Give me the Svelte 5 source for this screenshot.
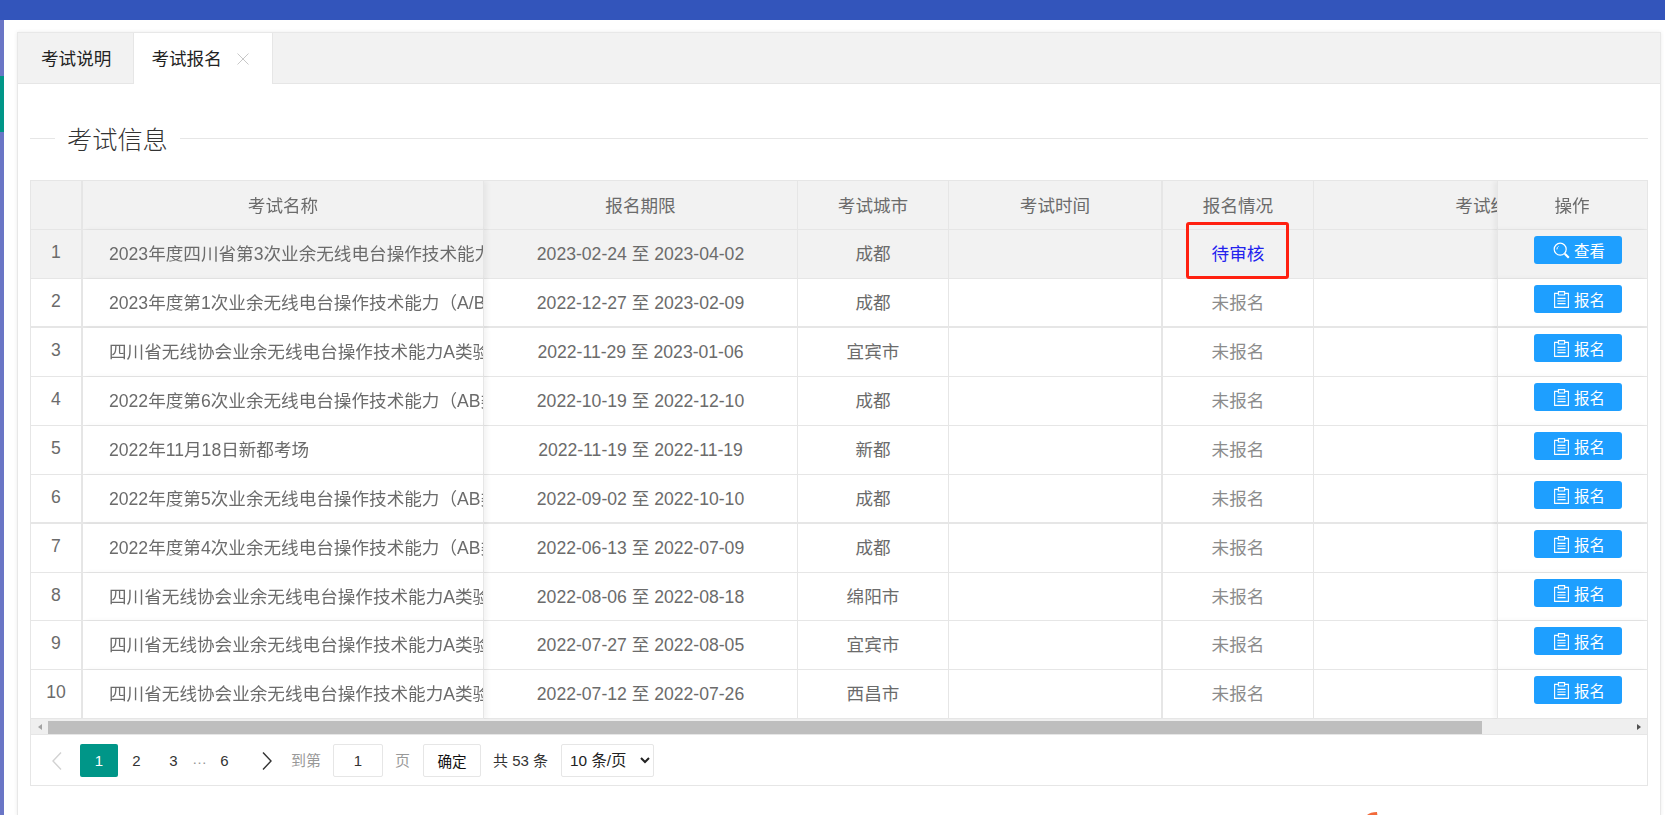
<script lang="ts">
	const columns = ['', '考试名称', '报名期限', '考试城市', '考试时间', '报名情况', '考试结果', '操作'];

	const exams = [
		{ name: '2023年度四川省第3次业余无线电台操作技术能力验证考试', start: '2023-02-24', end: '2023-04-02', city: '成都', status: '待审核' },
		{ name: '2023年度第1次业余无线电台操作技术能力（A/B类）考试', start: '2022-12-27', end: '2023-02-09', city: '成都', status: '未报名' },
		{ name: '四川省无线协会业余无线电台操作技术能力A类验证考试', start: '2022-11-29', end: '2023-01-06', city: '宜宾市', status: '未报名' },
		{ name: '2022年度第6次业余无线电台操作技术能力（AB类）考试', start: '2022-10-19', end: '2022-12-10', city: '成都', status: '未报名' },
		{ name: '2022年11月18日新都考场', start: '2022-11-19', end: '2022-11-19', city: '新都', status: '未报名' },
		{ name: '2022年度第5次业余无线电台操作技术能力（AB类）考试', start: '2022-09-02', end: '2022-10-10', city: '成都', status: '未报名' },
		{ name: '2022年度第4次业余无线电台操作技术能力（AB类）考试', start: '2022-06-13', end: '2022-07-09', city: '成都', status: '未报名' },
		{ name: '四川省无线协会业余无线电台操作技术能力A类验证考试', start: '2022-08-06', end: '2022-08-18', city: '绵阳市', status: '未报名' },
		{ name: '四川省无线协会业余无线电台操作技术能力A类验证考试', start: '2022-07-27', end: '2022-08-05', city: '宜宾市', status: '未报名' },
		{ name: '四川省无线协会业余无线电台操作技术能力A类验证考试', start: '2022-07-12', end: '2022-07-26', city: '西昌市', status: '未报名' }
	];
</script>

<div class="page">
	<div class="topbar"></div>
	<div class="body">
		<div class="strip"><div class="strip-active"></div></div>
		<main class="main">
			<section class="card">
				<div class="tabs">
					<div class="tab">考试说明</div>
					<div class="tab active">
						考试报名
						<svg class="close" viewBox="0 0 12 12" width="12" height="12"><path d="M.5.5l11 11M11.5.5l-11 11" stroke="#c8c8c8" fill="none" /></svg>
					</div>
				</div>
				<div class="content">
					<div class="legend"><span class="line short"></span><h2>考试信息</h2><span class="line"></span></div>

					<div class="table-box">
						<div class="table-scroll">
							<table>
								<colgroup>
									<col style="width:52px" /><col style="width:401px" /><col style="width:314px" /><col style="width:151px" />
									<col style="width:214px" /><col style="width:151px" /><col style="width:354px" /><col style="width:150px" />
								</colgroup>
								<thead>
									<tr>
										{#each columns as c, i}
											<th class:fix-index={i === 0} class:fix-name={i === 1} class:fix-op={i === 7} class:wide={i === 0 || i === 4}>{c}</th>
										{/each}
									</tr>
								</thead>
								<tbody>
									{#each exams as e, i}
										<tr class:current={i === 0} class:thick={i === 1 || i === 5} class:short-row={i === 7}>
											<td class="fix-index wide">{i + 1}</td>
											<td class="fix-name name"><div class="clip">{e.name}</div></td>
											<td>{e.start} 至 {e.end}</td>
											<td>{e.city}</td>
											<td class="wide"></td>
											<td class="status" class:pending={i === 0}>
												{e.status}
												{#if i === 0}<span class="mark"></span>{/if}
											</td>
											<td></td>
											<td class="fix-op op">
												<button class="btn">
													{#if i === 0}
														<svg viewBox="0 0 17 17" width="17" height="17" fill="none" stroke="#fff"><circle cx="7.2" cy="7.2" r="6" stroke-width="1.2" /><path d="M3.9 7.4a3.4 3.4 0 0 1 1.6-3" stroke-width="1" /><path d="M11.8 11.8l4 4" stroke-width="2.2" /></svg>
														查看
													{:else}
														<svg viewBox="0 0 17 17" width="17" height="17" fill="none" stroke="#fff" stroke-width="1.1"><path d="M5 2.4H1.6v14h13.8v-14H12" /><path d="M5.4 .6h6.2v3.4H5.4z" /><path d="M4.4 7.4h8.2M4.4 10h8.2M4.4 12.6h8.2" /></svg>
														报名
													{/if}
												</button>
											</td>
										</tr>
									{/each}
								</tbody>
							</table>
						</div>
						<div class="scrollbar">
							<span class="arrow left"></span>
							<div class="track"><div class="thumb"></div></div>
							<span class="arrow right"></span>
						</div>
						<div class="pager">
							<span class="pg nav">
								<svg viewBox="0 0 12 20" width="12" height="20" fill="none" stroke="#d2d2d2" stroke-width="1.4"><path d="M10 1.5L2 10l8 8.5" /></svg>
							</span>
							<span class="pg first">1</span>
							<span class="pg">2</span>
							<span class="pg">3</span>
							<span class="dots">…</span>
							<span class="pg">6</span>
							<span class="pg nav next">
								<svg viewBox="0 0 12 20" width="12" height="20" fill="none" stroke="#333" stroke-width="1.4"><path d="M2 1.5L10 10l-8 8.5" /></svg>
							</span>
							<span class="hint goto">到第</span>
							<input class="page-input" value="1" />
							<span class="hint unit">页</span>
							<button class="confirm">确定</button>
							<span class="total">共 53 条</span>
							<select class="size"><option>10 条/页</option><option>20 条/页</option></select>
						</div>
					</div>
				</div>
			</section>
		</main>
	</div>
	<svg class="corner" viewBox="0 0 12 4" width="12" height="4"><path d="M0 4C2 1.5 6 .2 11 0l.5 4z" fill="#f26a3a" /></svg>
</div>

<style>
	:global(body) {
		margin: 0;
		background: #fff;
	}

	.page {
		height: 815px;
		overflow: hidden;
		position: relative;
		display: flex;
		flex-direction: column;
		font-family: 'Liberation Sans', 'Noto Sans CJK SC', sans-serif;
		color: #6b6b6b;
		font-size: 17.6px;
	}

	.topbar {
		height: 20px;
		flex: none;
		background: #3355bb;
	}

	.body {
		flex: 1;
		display: flex;
		min-height: 0;
	}

	.strip {
		width: 4px;
		flex: none;
		background: #6a76c6;
		padding-top: 56px;
	}

	.strip-active {
		height: 56px;
		background: #009688;
	}

	.main {
		flex: 1;
		min-width: 0;
		padding: 12px 4px 0 13px;
	}

	.card {
		height: 100%;
		border: 1px solid #e8e8e8;
		border-bottom: none;
		box-shadow: 0 0 4px rgba(0, 0, 0, 0.08);
		background: #fff;
	}

	.tabs {
		display: flex;
		height: 51px;
		box-sizing: border-box;
		background: #f2f2f2;
		border-bottom: 1px solid #e6e6e6;
	}

	.tab {
		display: flex;
		align-items: center;
		padding: 0 22px 2px 23px;
		height: 50px;
		box-sizing: border-box;
		color: #222;
	}

	.tab.active {
		background: #fff;
		height: 51px;
		padding: 0 23px 2px 17px;
		border-left: 1px solid #e6e6e6;
		border-right: 1px solid #e6e6e6;
	}

	.close {
		margin-left: 15px;
		margin-top: 3px;
	}

	.content {
		padding: 36px 12px 0 12px;
	}

	.legend {
		display: flex;
		align-items: center;
		height: 36px;
		margin-bottom: 24px;
	}

	.legend h2 {
		margin: 0 12px;
		font-size: 25.2px;
		font-weight: 300;
		color: #333;
		white-space: nowrap;
	}

	.line {
		flex: 1;
		height: 1px;
		background: #e6e6e6;
	}

	.line.short {
		flex: none;
		width: 25px;
	}

	.table-box {
		border: 1px solid #e6e6e6;
	}

	.table-scroll {
		overflow: hidden;
	}

	table {
		width: 1787px;
		table-layout: fixed;
		border-collapse: separate;
		border-spacing: 0;
	}

	th,
	td {
		box-sizing: border-box;
		height: 49px;
		padding: 0 0 3px;
		background: #fff;
		text-align: center;
		font-weight: 400;
		white-space: nowrap;
		border-right: 1px solid #e6e6e6;
		border-bottom: 1px solid #e6e6e6;
		position: relative;
	}

	th {
		background: #f2f2f2;
		padding-bottom: 2px;
	}

	th.wide,
	td.wide {
		border-right-width: 2px;
	}

	tr.current td {
		background: #f2f2f2;
	}

	tr.thick td {
		border-bottom-width: 2px;
	}

	tr.short-row td {
		height: 48px;
	}

	.fix-index {
		position: sticky;
		left: 0;
		z-index: 2;
	}

	.fix-name {
		position: sticky;
		left: 52px;
		z-index: 2;
		box-shadow: 3px 0 5px rgba(0, 0, 0, 0.05);
	}

	.fix-op {
		position: sticky;
		right: 0;
		z-index: 2;
		border-right: none;
		border-left: 1px solid #e6e6e6;
		box-shadow: -3px 0 5px rgba(0, 0, 0, 0.05);
	}

	.name {
		text-align: left;
	}

	.clip {
		padding-left: 26px;
		overflow: hidden;
	}

	.status {
		color: #8c8c8c;
	}

	.status.pending {
		color: #2222ee;
		z-index: 1;
	}

	.mark {
		position: absolute;
		left: 23px;
		top: -8px;
		width: 103px;
		height: 57px;
		box-sizing: border-box;
		border: 3px solid #ff2010;
		border-radius: 3px;
	}

	th.fix-op {
		padding-right: 1px;
	}

	td.op {
		vertical-align: top;
		padding: 6px 0 0 10px;
	}

	.btn {
		display: inline-flex;
		align-items: center;
		justify-content: center;
		gap: 4px;
		width: 88px;
		height: 28px;
		padding: 0 0 0 3px;
		border: none;
		border-radius: 3px;
		background: #1e9fff;
		color: #fff;
		font: inherit;
		font-size: 15.4px;
	}

	.scrollbar {
		display: flex;
		align-items: center;
		height: 16px;
		background: #efefef;
		border-bottom: 1px solid #e6e6e6;
		box-sizing: border-box;
	}

	.arrow {
		flex: none;
		width: 17px;
		display: flex;
		justify-content: center;
	}

	.arrow::before {
		content: '';
		border: 3.5px solid transparent;
	}

	.arrow.left::before {
		border-right: 4px solid #a3a3a3;
		border-left: none;
	}

	.arrow.right::before {
		border-left: 4px solid #505050;
		border-right: none;
	}

	.track {
		flex: 1;
		height: 13px;
		margin-top: 2px;
	}

	.thumb {
		width: 1434px;
		height: 100%;
		background: #bebebe;
	}

	.pager {
		display: flex;
		align-items: flex-start;
		height: 50px;
		box-sizing: border-box;
		padding: 9px 0 0 7px;
		font-size: 15px;
	}

	.pg {
		width: 37px;
		height: 33px;
		display: flex;
		align-items: center;
		justify-content: center;
		color: #333;
	}

	.pg.nav {
		width: 38px;
		margin-right: 4px;
	}

	.pg.first {
		width: 38px;
		background: #009688;
		color: #fff;
		border-radius: 2px;
	}

	.pg.next {
		width: 40px;
		margin: 0 0 0 4px;
	}

	.dots {
		width: 14px;
		height: 33px;
		line-height: 30px;
		text-align: center;
		color: #999;
	}

	.hint {
		color: #999;
		line-height: 33px;
	}

	.goto {
		margin-left: 4px;
	}

	.page-input {
		box-sizing: border-box;
		width: 50px;
		height: 33px;
		margin-left: 12px;
		padding: 0;
		border: 1px solid #e6e6e6;
		border-radius: 2px;
		text-align: center;
		font: inherit;
		color: #333;
	}

	.unit {
		margin-left: 12px;
	}

	.confirm {
		width: 58px;
		height: 33px;
		margin-left: 13px;
		padding: 0;
		background: #fff;
		border: 1px solid #e6e6e6;
		border-radius: 2px;
		font: inherit;
		font-size: 14.6px;
		color: #111;
	}

	.total {
		margin-left: 12px;
		line-height: 33px;
		color: #333;
	}

	.size {
		width: 93px;
		height: 33px;
		margin-left: 13px;
		padding-left: 4px;
		background: #fff;
		border: 1px solid #e6e6e6;
		border-radius: 2px;
		font: inherit;
		font-size: 15.4px;
		color: #222;
	}

	.corner {
		position: absolute;
		left: 1366px;
		top: 812px;
	}
</style>
